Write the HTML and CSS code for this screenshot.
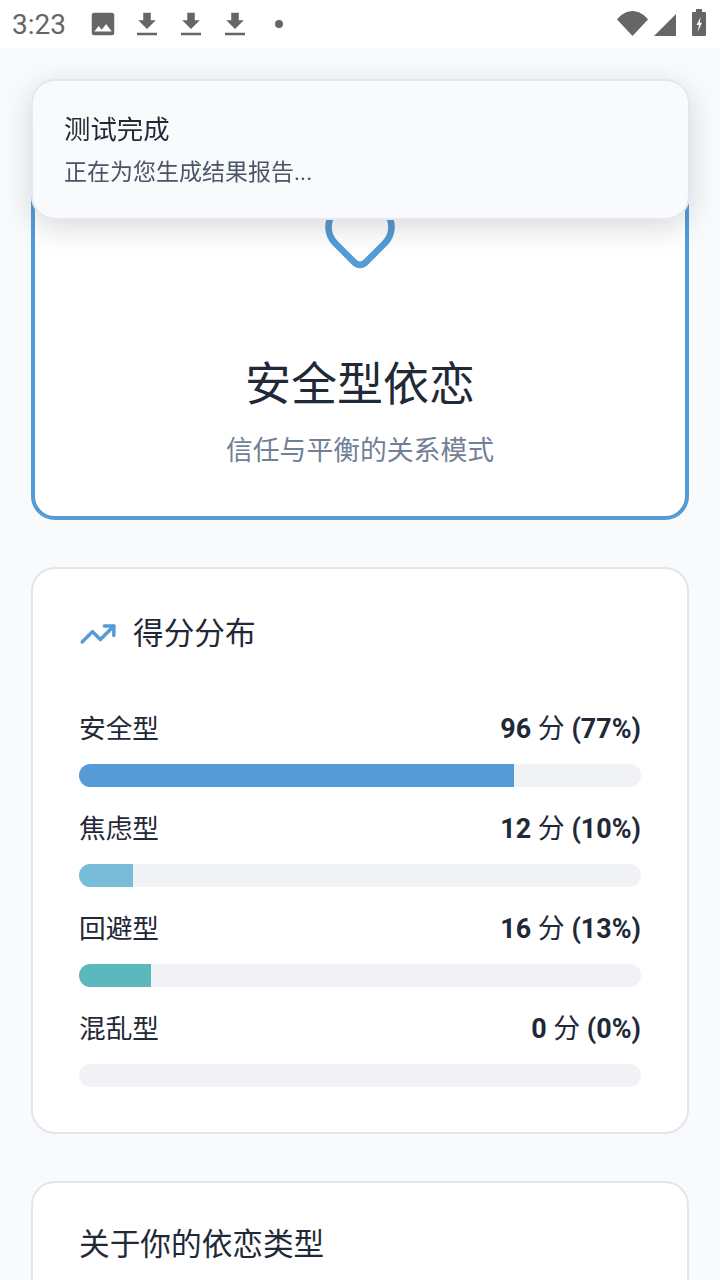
FILE: index.html
```html
<!DOCTYPE html>
<html lang="zh">
<head>
<meta charset="utf-8">
<title>测试结果</title>
<link rel="stylesheet" href="styles.css">
</head>
<body>
<header class="status">
  <div class="status-left">
    <span class="time">3:23</span>
    <svg class="si" viewBox="0 0 24 24"><path d="M21 19V5a2 2 0 0 0-2-2H5a2 2 0 0 0-2 2v14a2 2 0 0 0 2 2h14a2 2 0 0 0 2-2zM8.500 13.500l2.500 3 3.500-4.500 4.500 6H5l3.500-4.500z"/></svg>
    <svg class="si" viewBox="0 0 24 24"><path d="M19 9h-4V3H9v6H5l7 7 7-7zM4 19v2h16v-2H4z"/></svg>
    <svg class="si" viewBox="0 0 24 24"><path d="M19 9h-4V3H9v6H5l7 7 7-7zM4 19v2h16v-2H4z"/></svg>
    <svg class="si" viewBox="0 0 24 24"><path d="M19 9h-4V3H9v6H5l7 7 7-7zM4 19v2h16v-2H4z"/></svg>
    <span class="dot"></span>
  </div>
  <div class="status-right">
    <svg class="wifi" viewBox="0 0 31 25"><path d="M15.500 25 0 8.500C4 3.500 9.500 0 15.500 0S27 3.500 31 8.500z"/></svg>
    <svg class="signal" viewBox="0 0 22 22"><path d="M22 0v22H0z"/></svg>
    <svg class="batt" viewBox="0 0 14 27"><path fill-rule="evenodd" d="M4 0h6v3h3a1 1 0 0 1 1 1v22a1 1 0 0 1-1 1H1a1 1 0 0 1-1-1V4a1 1 0 0 1 1-1h3zM8.700 8 4.500 16H7L5.700 23 10 13.700H7.700z"/></svg>
  </div>
</header>

<main class="page">
  <section class="card hero">
    <svg class="heart" viewBox="0 0 80 80"><path d="M33.600 67.600Q40 74 46.400 67.600L64.500 49.500C69.500 44.500 71.500 39 71.500 33 71.500 15 50 8 40 20 30 8 8.500 15 8.500 33 8.500 39 10.500 44.500 15.500 49.500z"/></svg>
    <h1 class="hero-title">安全型依恋</h1>
    <p class="hero-sub">信任与平衡的关系模式</p>
  </section>

  <section class="card dist">
    <h2 class="card-title">
      <svg class="trend" viewBox="0 0 24 24"><path d="M22 7 13.500 15.500 8.500 10.500 2 17"/><path d="M16 7h6v6"/></svg>
      得分分布
    </h2>
    <div class="rows">
      <div class="row">
        <div class="row-head"><span>安全型</span><span class="score"><b>96</b> 分 <b>(77%)</b></span></div>
        <div class="track"><div class="fill c1" style="width:77.4%"></div></div>
      </div>
      <div class="row">
        <div class="row-head"><span>焦虑型</span><span class="score"><b>12</b> 分 <b>(10%)</b></span></div>
        <div class="track"><div class="fill c2" style="width:9.68%"></div></div>
      </div>
      <div class="row">
        <div class="row-head"><span>回避型</span><span class="score"><b>16</b> 分 <b>(13%)</b></span></div>
        <div class="track"><div class="fill c3" style="width:12.9%"></div></div>
      </div>
      <div class="row">
        <div class="row-head"><span>混乱型</span><span class="score"><b>0</b> 分 <b>(0%)</b></span></div>
        <div class="track"></div>
      </div>
    </div>
  </section>

  <section class="card about">
    <h2 class="card-title plain">关于你的依恋类型</h2>
  </section>
</main>

<aside class="toast">
  <div class="toast-title">测试完成</div>
  <div class="toast-sub">正在为您生成结果报告...</div>
</aside>
</body>
</html>
```

FILE: styles.css
```css
* { box-sizing: border-box; }
html, body { margin: 0; padding: 0; }
body {
  width: 720px;
  height: 1280px;
  overflow: hidden;
  position: relative;
  background: #f8fafc;
  color: #1f2937;
  font-family: Roboto, "Noto Sans CJK SC", sans-serif;
}
.status {
  height: 48px;
  background: #fff;
  display: flex;
  justify-content: space-between;
  align-items: center;
  padding: 0 14px 0 12px;
  fill: #666;
}
.status-left { display: flex; align-items: center; }
.status-right {
  display: flex;
  align-items: flex-end;
  align-self: flex-start;
  margin-top: 9px;
  height: 27px;
}
.time { font-size: 28px; color: #666; width: 76px; }
.si { width: 30px; height: 30px; margin-right: 14px; display: block; }
.dot { width: 8px; height: 8px; border-radius: 50%; background: #666; margin-left: 11px; }
.wifi { width: 31px; height: 25px; display: block; margin-right: 6px; }
.signal { width: 22px; height: 22px; display: block; margin-right: 16px; }
.batt { width: 14px; height: 27px; display: block; }

.page {
  padding: 62px 31px 0;
  display: flex;
  flex-direction: column;
  gap: 46.67px;
}
.card {
  background: #fff;
  border: 2px solid #e2e6ec;
  border-radius: 24px;
  padding: 46px;
}
.hero {
  height: 410px;
  border: 4px solid #559bd6;
  padding: 80px 0 0;
  display: flex;
  flex-direction: column;
  align-items: center;
}
.heart {
  width: 80px;
  height: 80px;
  fill: none;
  stroke: #559bd6;
  stroke-width: 6.6;
  stroke-linejoin: round;
  stroke-linecap: round;
  display: block;
}
.hero-title {
  margin: 77px 0 0;
  font-size: 46px;
  line-height: 66px;
  font-weight: 400;
}
.hero-sub {
  margin: 14px 0 0;
  font-size: 26.8px;
  line-height: 40px;
  color: #718096;
}
.dist { padding-bottom: 45px; }
.about { padding-top: 43px; }
.card-title {
  margin: 0;
  font-size: 30.67px;
  line-height: 38px;
  font-weight: 400;
  display: flex;
  align-items: center;
  gap: 16px;
}
.trend {
  width: 38px;
  height: 38px;
  fill: none;
  stroke: #559bd6;
  stroke-width: 2.2;
  stroke-linecap: round;
  stroke-linejoin: round;
  flex: none;
}
.rows { margin-top: 56.33px; display: flex; flex-direction: column; gap: 22px; }
.row-head {
  display: flex;
  justify-content: space-between;
  align-items: center;
  font-size: 26.67px;
  line-height: 40px;
}
.score { font-size: 26.9px; }
.score b { font-weight: 700; }
.track {
  margin-top: 15px;
  height: 23px;
  border-radius: 12px;
  background: #f0f2f6;
  overflow: hidden;
}
.fill { height: 100%; }
.c1 { background: #559bd6; }
.c2 { background: #78bcd8; }
.c3 { background: #5bb9be; }

.toast {
  position: absolute;
  left: 31px;
  top: 79px;
  width: 659px;
  height: 141px;
  padding: 30px 31px;
  background: rgba(249, 250, 252, 0.98);
  -webkit-backdrop-filter: blur(12px);
  backdrop-filter: blur(12px);
  border: 2px solid rgba(226, 230, 236, 0.9);
  border-radius: 24px;
  box-shadow: 0 8px 30px rgba(0, 0, 0, 0.15);
}
.toast-title { font-size: 26.4px; line-height: 38px; color: #1f2937; }
.toast-sub { margin-top: 7px; font-size: 23px; line-height: 34px; color: #4a5568; }
```
